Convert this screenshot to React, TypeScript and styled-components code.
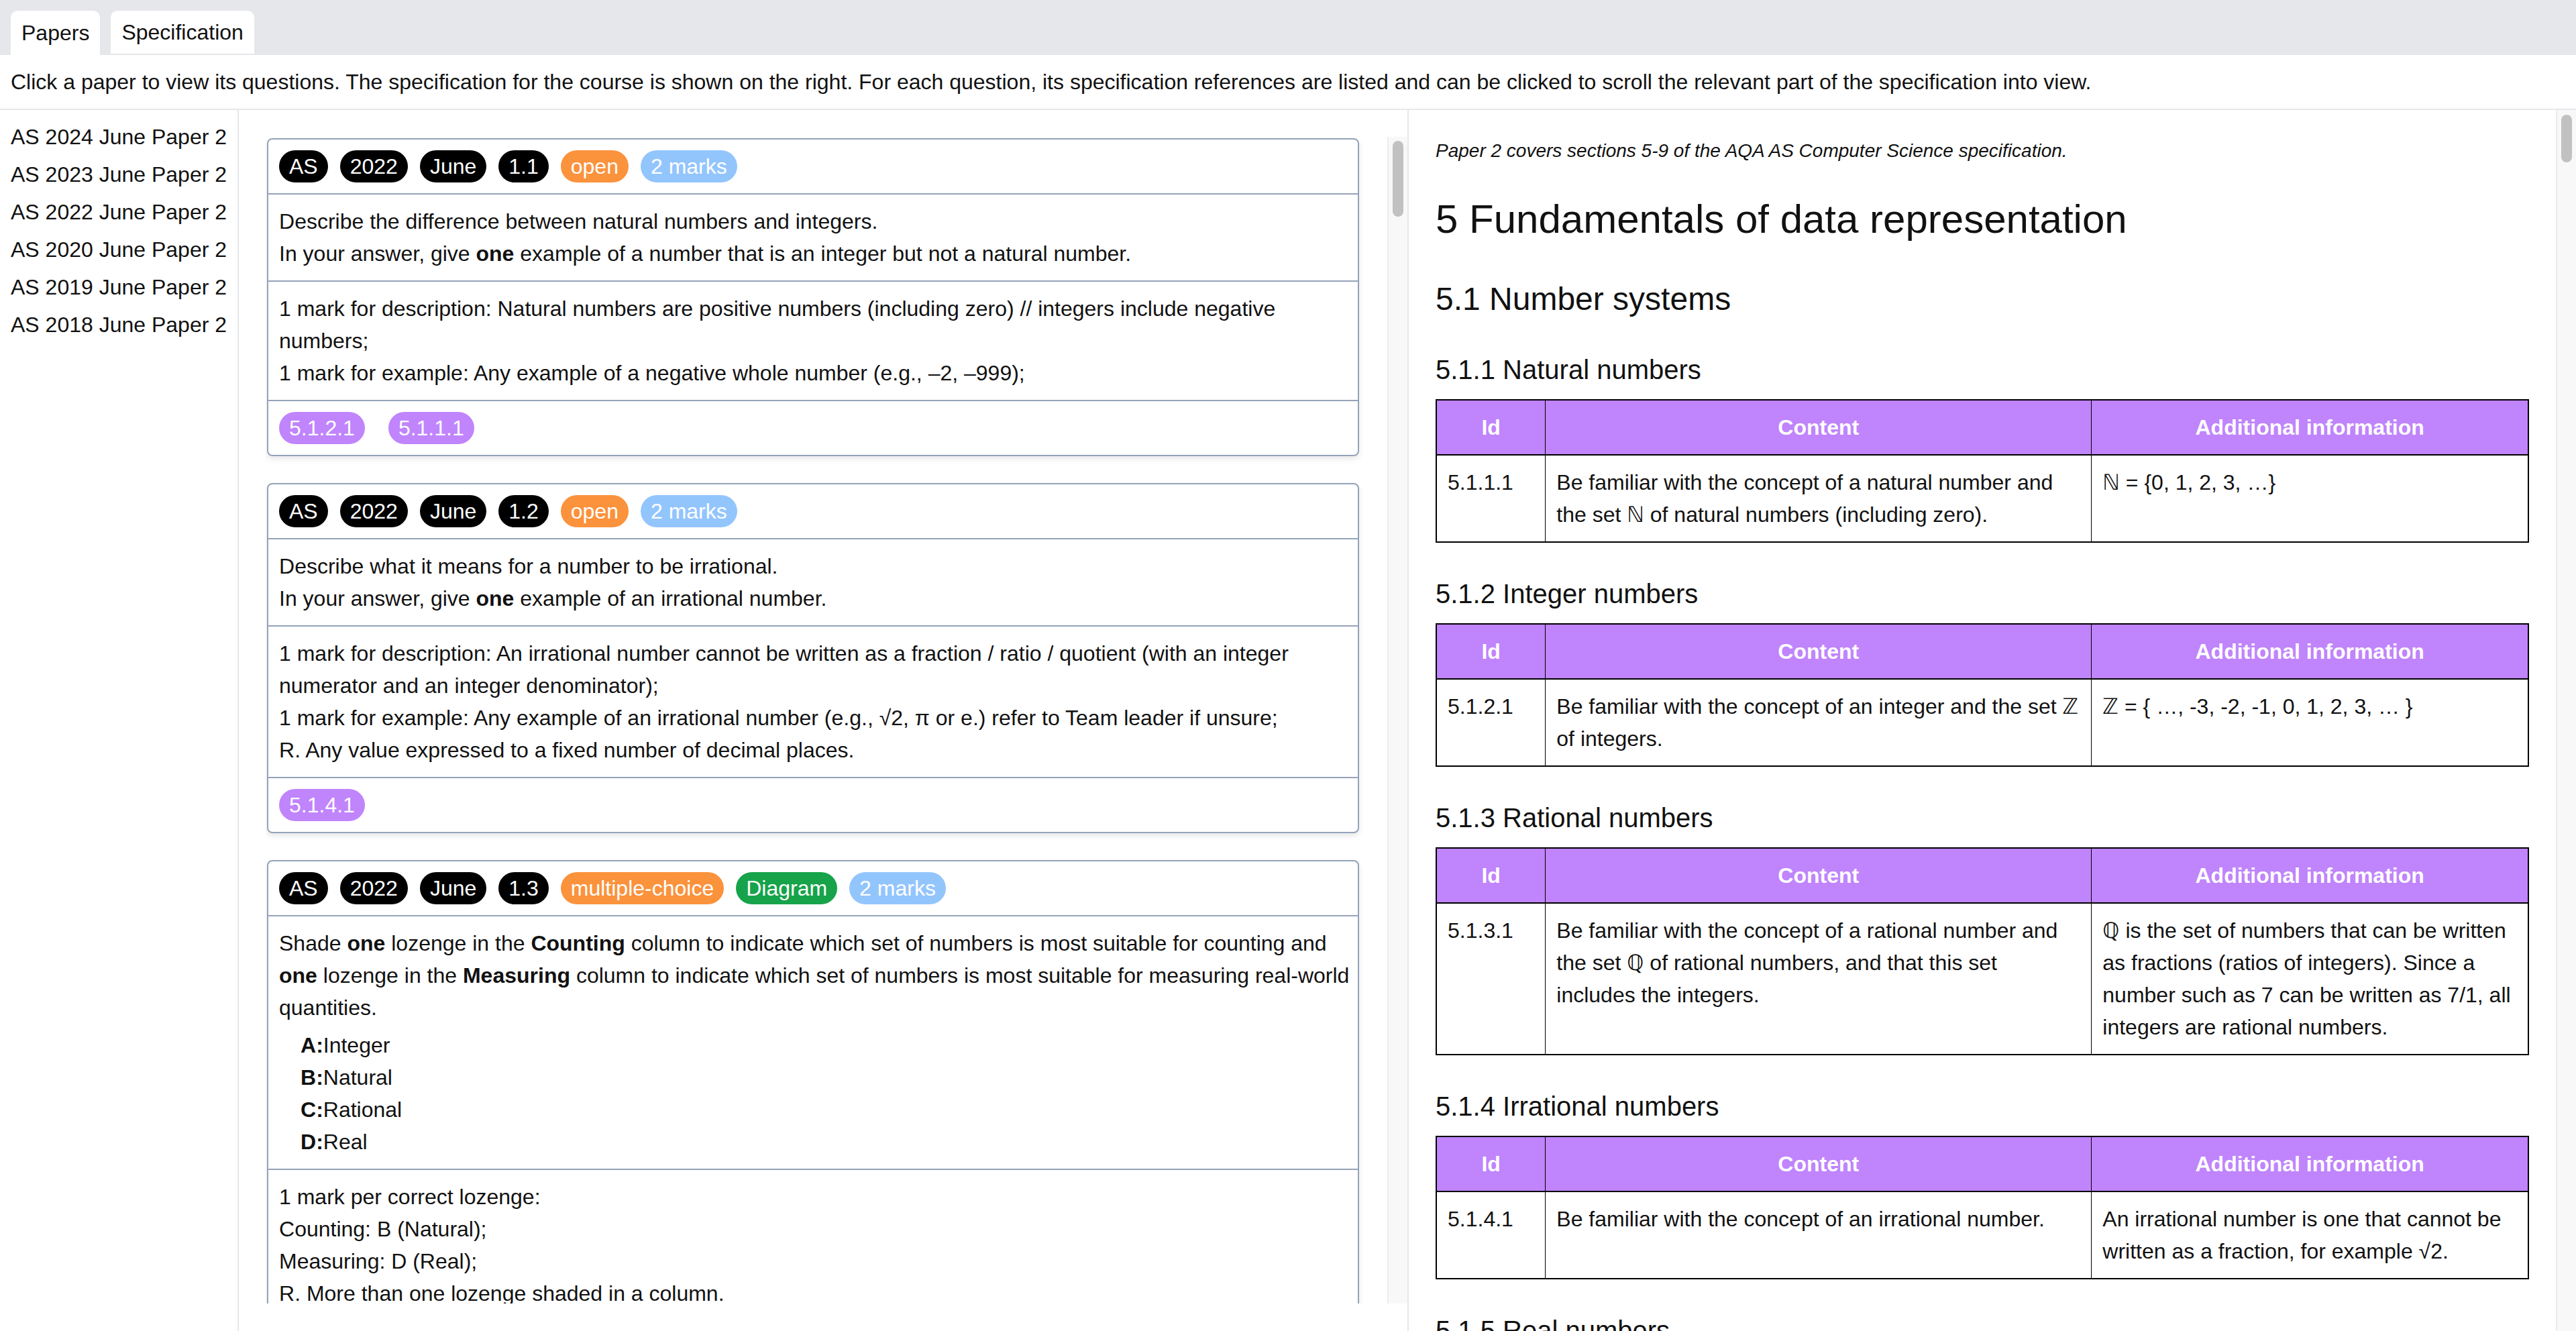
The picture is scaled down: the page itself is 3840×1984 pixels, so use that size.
import React from "react";
import styled, { createGlobalStyle } from "styled-components";

const FONT = `"Liberation Sans", Arial, "DejaVu Sans", sans-serif`;

const GlobalStyle = createGlobalStyle`
  html, body, #root {
    height: 100%;
    margin: 0;
  }
  body {
    font-family: ${FONT};
    font-size: 32px;
    line-height: 48px;
    color: #111;
    background: #fff;
    overflow: hidden;
  }
`;

const Page = styled.div`
  height: 100vh;
  display: flex;
  flex-direction: column;
`;

const TabBar = styled.div`
  display: flex;
  align-items: flex-start;
  gap: 16px;
  height: 82px;
  padding: 16px 16px 0;
  box-sizing: border-box;
  background: #e5e7eb;
`;

const Tab = styled.button<{ $active?: boolean }>`
  font: inherit;
  color: #111;
  border: none;
  background: #fff;
  border-radius: 10px 10px 0 0;
  padding: 0 16px;
  height: ${({ $active }) => ($active ? "66px" : "64px")};
  line-height: 64px;
  cursor: pointer;
`;

const Intro = styled.div`
  padding: 16px;
  border-bottom: 2px solid #e5e7eb;
`;

const Body = styled.div`
  flex: 1;
  min-height: 0;
  display: grid;
  grid-template-columns: auto 1fr 1fr;
  grid-template-rows: minmax(0, 1fr);
`;

const Sidebar = styled.nav`
  padding: 16px;
  border-right: 2px solid #e5e7eb;
`;

const PaperLink = styled.a`
  display: block;
  color: #111;
  text-decoration: none;
  white-space: nowrap;
  margin-bottom: 8px;
  cursor: pointer;
`;

/* scroll areas keep 30px on the right for the drawn scrollbar */
const ScrollArea = styled.div`
  position: relative;
  display: flex;
  min-height: 0;
  min-width: 0;
  padding-right: 30px;
`;

const Scroller = styled.div`
  flex: 1;
  min-width: 0;
  overflow-y: auto;
  scrollbar-width: none;
  &::-webkit-scrollbar {
    display: none;
  }
`;

const Track = styled.div`
  position: absolute;
  top: 0;
  right: 0;
  bottom: 0;
  width: 30px;
  box-sizing: border-box;
  background: #f8f8f8;
  border-left: 2px solid #ececec;
`;

const Thumb = styled.div<{ $top: number; $height: number }>`
  position: absolute;
  left: 6px;
  width: 16px;
  top: ${({ $top }) => $top}px;
  height: ${({ $height }) => $height}px;
  border-radius: 8px;
  background: #c1c1c1;
`;

const Middle = styled.div`
  min-height: 0;
  display: flex;
  flex-direction: column;
  padding: 40px 0 41px 40px;

  ${ScrollArea} {
    flex: 1;
  }
`;

const QuestionList = styled(Scroller)`
  padding: 2px 42px 2px 2px;
`;

const Card = styled.article`
  border: 2px solid #94a3b8;
  border-radius: 8px;
  box-shadow: 0 4px 8px rgba(15, 23, 42, 0.1);
  margin-bottom: 40px;
  background: #fff;
`;

const Section = styled.div`
  padding: 16px 8px 16px 16px;
  & + & {
    border-top: 2px solid #94a3b8;
  }
`;

const BadgeRow = styled.div<{ $gap?: number }>`
  display: flex;
  flex-wrap: wrap;
  gap: ${({ $gap }) => $gap ?? 18}px;
`;

const BADGE_COLOURS: Record<string, string> = {
  black: "#000",
  orange: "#fb923c",
  green: "#16a34a",
  blue: "#93c5fd",
  purple: "#c084fc",
};

const Badge = styled.span<{ $tone: string }>`
  display: inline-block;
  height: 48px;
  line-height: 48px;
  padding: 0 15px;
  border-radius: 24px;
  color: #fff;
  white-space: nowrap;
  background: ${({ $tone }) => BADGE_COLOURS[$tone]};
`;

const RefBadge = styled(Badge).attrs({ as: "button" })`
  font: inherit;
  line-height: 48px;
  border: none;
  cursor: pointer;
`;

const Line = styled.div``;

const Options = styled.ul`
  list-style: none;
  margin: 8px 0 0;
  padding-left: 32px;
`;

const SpecPanel = styled(ScrollArea)`
  border-left: 2px solid #e5e7eb;
`;

const SpecScroll = styled(Scroller)`
  padding: 40px;
`;

const Note = styled.p`
  font-size: 28px;
  line-height: 42px;
  font-style: italic;
  margin: 0 0 45px;
`;

const H1 = styled.h1`
  font-size: 60px;
  line-height: 72px;
  font-weight: normal;
  margin: 0;
`;

const H2 = styled.h2`
  font-size: 48px;
  line-height: 58px;
  font-weight: normal;
  margin: 54px 0 0;
`;

const H3 = styled.h3`
  font-size: 40px;
  line-height: 48px;
  font-weight: normal;
  margin: 52px 0 20px;
`;

const SpecTable = styled.table`
  width: 100%;
  table-layout: fixed;
  border-collapse: collapse;
  border: 2px solid #000;
`;

const Th = styled.th`
  background: #c084fc;
  color: #fff;
  font-weight: bold;
  text-align: center;
  padding: 16px;
  border: 1px solid #000;
  border-bottom: 2px solid #000;
`;

const Td = styled.td`
  vertical-align: top;
  text-align: left;
  padding: 16px;
  border: 1px solid #000;
`;

type Question = {
  code: string;
  tags: { label: string; tone: string }[];
  question: React.ReactNode[];
  options?: [string, string][];
  marks: React.ReactNode[];
  refs: string[];
};

const papers = [
  "AS 2024 June Paper 2",
  "AS 2023 June Paper 2",
  "AS 2022 June Paper 2",
  "AS 2020 June Paper 2",
  "AS 2019 June Paper 2",
  "AS 2018 June Paper 2",
];

const open = { label: "open", tone: "orange" };
const marks = (n: number) => ({ label: `${n} mark${n === 1 ? "" : "s"}`, tone: "blue" });

const questions: Question[] = [
  {
    code: "1.1",
    tags: [open, marks(2)],
    question: [
      "Describe the difference between natural numbers and integers.",
      <>In your answer, give <b>one</b> example of a number that is an integer but not a natural number.</>,
    ],
    marks: [
      "1 mark for description: Natural numbers are positive numbers (including zero) // integers include negative numbers;",
      "1 mark for example: Any example of a negative whole number (e.g., –2, –999);",
    ],
    refs: ["5.1.2.1", "5.1.1.1"],
  },
  {
    code: "1.2",
    tags: [open, marks(2)],
    question: [
      "Describe what it means for a number to be irrational.",
      <>In your answer, give <b>one</b> example of an irrational number.</>,
    ],
    marks: [
      "1 mark for description: An irrational number cannot be written as a fraction / ratio / quotient (with an integer numerator and an integer denominator);",
      "1 mark for example: Any example of an irrational number (e.g., √2, π or e.) refer to Team leader if unsure;",
      "R. Any value expressed to a fixed number of decimal places.",
    ],
    refs: ["5.1.4.1"],
  },
  {
    code: "1.3",
    tags: [{ label: "multiple-choice", tone: "orange" }, { label: "Diagram", tone: "green" }, marks(2)],
    question: [
      <>
        Shade <b>one</b> lozenge in the <b>Counting</b> column to indicate which set of numbers is most suitable for
        counting and <b>one</b> lozenge in the <b>Measuring</b> column to indicate which set of numbers is most
        suitable for measuring real-world quantities.
      </>,
    ],
    options: [
      ["A", "Integer"],
      ["B", "Natural"],
      ["C", "Rational"],
      ["D", "Real"],
    ],
    marks: [
      "1 mark per correct lozenge:",
      "Counting: B (Natural);",
      "Measuring: D (Real);",
      "R. More than one lozenge shaded in a column.",
    ],
    refs: ["5.1.7.1"],
  },
  {
    code: "2.1",
    tags: [open, marks(1)],
    question: ["Convert the hexadecimal number 9F into decimal.", "You should show your working."],
    marks: ["1 mark: 159;", "A. Answers with a subscript of 10."],
    refs: ["5.2.1.2"],
  },
  {
    code: "2.2",
    tags: [open, marks(1)],
    question: ["Explain why hexadecimal is often used instead of binary."],
    marks: [
      "1 mark: Hexadecimal is easier for people to read / remember / write than binary // fewer digits are needed;",
      "R. Takes up less space in memory // is processed more quickly by the computer.",
    ],
    refs: ["5.2.1.3"],
  },
  {
    code: "3.1",
    tags: [open, marks(2)],
    question: [
      "Represent the decimal number –43 as an 8-bit two’s complement binary integer.",
      "You should show your working.",
    ],
    marks: ["1 mark: Correct binary representation of 43 (00101011);", "1 mark: 11010101;"],
    refs: ["5.4.2.1", "5.4.2.2"],
  },
  {
    code: "3.2",
    tags: [open, marks(2)],
    question: ["Calculate the range of values that can be represented using 8-bit two’s complement binary."],
    marks: ["1 mark: Lowest value –128;", "1 mark: Highest value 127;"],
    refs: ["5.4.2.2"],
  },
];

type SpecRow = [string, React.ReactNode, React.ReactNode];
type SpecTopic = { title: string; rows: SpecRow[] };
type SpecChapter = { title: string; topics: SpecTopic[] };

const spec: SpecChapter[] = [
  {
    title: "5.1 Number systems",
    topics: [
      {
        title: "5.1.1 Natural numbers",
        rows: [["5.1.1.1", "Be familiar with the concept of a natural number and the set ℕ of natural numbers (including zero).", "ℕ = {0, 1, 2, 3, …}"]],
      },
      {
        title: "5.1.2 Integer numbers",
        rows: [["5.1.2.1", "Be familiar with the concept of an integer and the set ℤ of integers.", "ℤ = { …, -3, -2, -1, 0, 1, 2, 3, … }"]],
      },
      {
        title: "5.1.3 Rational numbers",
        rows: [
          [
            "5.1.3.1",
            "Be familiar with the concept of a rational number and the set ℚ of rational numbers, and that this set includes the integers.",
            "ℚ is the set of numbers that can be written as fractions (ratios of integers). Since a number such as 7 can be written as 7/1, all integers are rational numbers.",
          ],
        ],
      },
      {
        title: "5.1.4 Irrational numbers",
        rows: [["5.1.4.1", "Be familiar with the concept of an irrational number.", "An irrational number is one that cannot be written as a fraction, for example √2."]],
      },
      {
        title: "5.1.5 Real numbers",
        rows: [
          [
            "5.1.5.1",
            "Be familiar with the concept of a real number and the set ℝ of real numbers (which includes the natural numbers, the rational numbers, and the irrational numbers).",
            "ℝ is the set of all ‘possible real world quantities’.",
          ],
        ],
      },
      {
        title: "5.1.6 Ordinal numbers",
        rows: [
          [
            "5.1.6.1",
            "Be familiar with the concept of ordinal numbers and their use to describe the numerical positions of objects.",
            "When objects are placed in order, ordinal numbers are used to tell their position. For example, if we have a well-ordered set S = {‘a’, ‘b’, ‘c’, ‘d’}, then ‘a’ is the 1st object, ‘b’ the 2nd, and so on.",
          ],
        ],
      },
      {
        title: "5.1.7 Counting and measurement",
        rows: [["5.1.7.1", "Be familiar with the use of: natural numbers for counting, real numbers for measurement.", ""]],
      },
    ],
  },
  {
    title: "5.2 Number bases",
    topics: [
      {
        title: "5.2.1 Number base",
        rows: [
          ["5.2.1.1", "Be familiar with the concept of a number base, in particular: decimal (base 10), binary (base 2), hexadecimal (base 16).", "Students should be familiar with expressing a number’s base using a subscript as follows: Decimal: 10₁₀, Binary: 1010₂, Hexadecimal: A₁₆"],
          ["5.2.1.2", "Convert between decimal, binary and hexadecimal number bases.", ""],
          ["5.2.1.3", "Be familiar with, and able to use, hexadecimal as a shorthand for binary and to understand why it is used.", ""],
        ],
      },
    ],
  },
  {
    title: "5.3 Units of information",
    topics: [
      {
        title: "5.3.1 Bits and bytes",
        rows: [
          ["5.3.1.1", "Know that: the bit is the fundamental unit of information, a byte is a group of 8 bits.", "A bit is either 0 or 1."],
          ["5.3.1.2", "Know that the 2ⁿ different values can be represented with n bits.", "For example, 3 bits can be configured in 2³ = 8 different ways."],
        ],
      },
      {
        title: "5.3.2 Units",
        rows: [
          ["5.3.2.1", "Know that quantities of bytes can be described using binary prefixes representing powers of 2 or using decimal prefixes representing powers of 10, eg one kibibyte is written as 1KiB = 2¹⁰ B and one kilobyte is written as 1 kB = 10³ B.", "Historically the terms kilobyte, megabyte, etc have often been used when kibibyte, mebibyte, etc are meant."],
        ],
      },
    ],
  },
  {
    title: "5.4 Binary number system",
    topics: [
      {
        title: "5.4.1 Unsigned binary",
        rows: [
          ["5.4.1.1", "Know the difference between unsigned binary and signed binary.", ""],
          ["5.4.1.2", "Know that in unsigned binary the minimum and maximum values for a given number of bits, n, are 0 and 2ⁿ - 1 respectively.", ""],
        ],
      },
      {
        title: "5.4.2 Unsigned binary arithmetic",
        rows: [
          ["5.4.2.1", "Be able to: add two unsigned binary integers, multiply two unsigned binary integers.", "Restrict operands and results to a maximum of 16 bits."],
          ["5.4.2.2", "Know how to represent negative and positive integers in two’s complement.", ""],
        ],
      },
    ],
  },
];

const QuestionCard: React.FC<{ q: Question }> = ({ q }) => (
  <Card>
    <Section>
      <BadgeRow>
        {["AS", "2022", "June", q.code].map((t) => (
          <Badge key={t} $tone="black">
            {t}
          </Badge>
        ))}
        {q.tags.map((t) => (
          <Badge key={t.label} $tone={t.tone}>
            {t.label}
          </Badge>
        ))}
      </BadgeRow>
    </Section>
    <Section>
      {q.question.map((line, i) => (
        <Line key={i}>{line}</Line>
      ))}
      {q.options && (
        <Options>
          {q.options.map(([letter, label]) => (
            <li key={letter}>
              <b>{letter}:</b>
              {label}
            </li>
          ))}
        </Options>
      )}
    </Section>
    <Section>
      {q.marks.map((line, i) => (
        <Line key={i}>{line}</Line>
      ))}
    </Section>
    <Section>
      <BadgeRow $gap={35}>
        {q.refs.map((r) => (
          <RefBadge key={r} $tone="purple">
            {r}
          </RefBadge>
        ))}
      </BadgeRow>
    </Section>
  </Card>
);

const App: React.FC = () => {
  return (
    <Page>
      <GlobalStyle />
      <TabBar>
        <Tab $active>Papers</Tab>
        <Tab>Specification</Tab>
      </TabBar>
      <Intro>
        Click a paper to view its questions. The specification for the course is shown on the right. For each question,
        its specification references are listed and can be clicked to scroll the relevant part of the specification
        into view.
      </Intro>
      <Body>
        <Sidebar>
          {papers.map((p) => (
            <PaperLink key={p}>{p}</PaperLink>
          ))}
        </Sidebar>
        <Middle>
          <ScrollArea>
            <QuestionList>
              {questions.map((q) => (
                <QuestionCard key={q.code} q={q} />
              ))}
            </QuestionList>
            <Track>
              <Thumb $top={6} $height={113} />
            </Track>
          </ScrollArea>
        </Middle>
        <SpecPanel>
          <SpecScroll>
            <Note>Paper 2 covers sections 5-9 of the AQA AS Computer Science specification.</Note>
            <H1>5 Fundamentals of data representation</H1>
            {spec.map((chapter) => (
              <React.Fragment key={chapter.title}>
                <H2>{chapter.title}</H2>
                {chapter.topics.map((topic) => (
                  <React.Fragment key={topic.title}>
                    <H3>{topic.title}</H3>
                    <SpecTable>
                      <colgroup>
                        <col style={{ width: "10%" }} />
                        <col style={{ width: "50%" }} />
                        <col style={{ width: "40%" }} />
                      </colgroup>
                      <thead>
                        <tr>
                          <Th>Id</Th>
                          <Th>Content</Th>
                          <Th>Additional information</Th>
                        </tr>
                      </thead>
                      <tbody>
                        {topic.rows.map(([id, content, info]) => (
                          <tr key={id}>
                            <Td>{id}</Td>
                            <Td>{content}</Td>
                            <Td>{info}</Td>
                          </tr>
                        ))}
                      </tbody>
                    </SpecTable>
                  </React.Fragment>
                ))}
              </React.Fragment>
            ))}
          </SpecScroll>
          <Track>
            <Thumb $top={7} $height={71} />
          </Track>
        </SpecPanel>
      </Body>
    </Page>
  );
};

export default App;
